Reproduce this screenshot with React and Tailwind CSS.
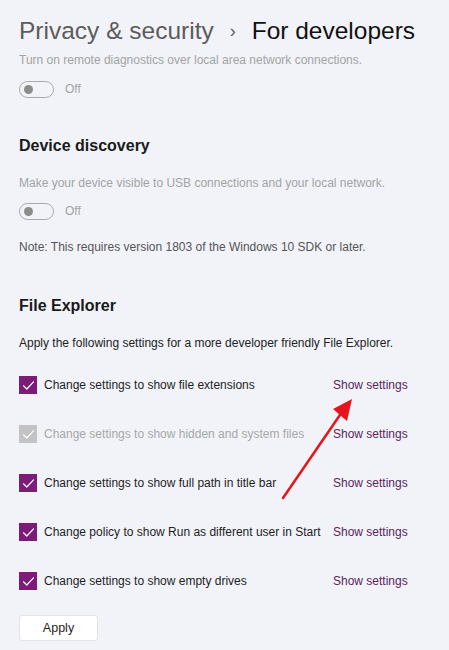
import React from "react";

function Toggle() {
  return (
    <div className="h-[20px] flex items-center">
      <div className="w-[35px] h-[17px] rounded-full border border-[#a9a9a9] flex items-center pl-[4px]">
        <div className="w-[9px] h-[9px] rounded-full bg-[#8c8c8c]" />
      </div>
      <span className="ml-[11px] text-[12px] text-[#a3a3a3]">Off</span>
    </div>
  );
}

function Check({ disabled }) {
  return (
    <div
      className={
        "w-[18px] h-[18px] flex items-center justify-center shrink-0 " +
        (disabled ? "bg-[#c3c3c6]" : "bg-[#7c1b78]")
      }
    >
      <svg width="13" height="13" viewBox="0 0 13 13" fill="none">
        <path d="M1.5 6.8 L4.8 10 L11.5 2.8" stroke="white" strokeWidth="1.2" strokeLinecap="round" strokeLinejoin="round" />
      </svg>
    </div>
  );
}

function Row({ label, disabled, first }) {
  return (
    <div className={"h-[20px] flex items-center " + (first ? "mt-[23px]" : "mt-[29px]")}>
      <Check disabled={disabled} />
      <span
        className={
          "ml-[7px] w-[289px] text-[12px] whitespace-nowrap " +
          (disabled ? "text-[#a8a8a8]" : "text-[#1e1e1e]")
        }
      >
        {label}
      </span>
      <span className="text-[12px] text-[#5b2459] whitespace-nowrap">Show settings</span>
    </div>
  );
}

export default function App() {
  return (
    <div
      className="relative w-[449px] h-[650px] bg-[#f1f3f9] overflow-hidden px-[19px]"
      style={{ fontFamily: '"Liberation Sans", Arial, sans-serif' }}
    >
      <div className="mt-[15px] h-[32px] flex items-center whitespace-nowrap">
        <span className="text-[24.5px] text-[#5c5c5c]">Privacy &amp; security</span>
        <span className="mx-[16px] text-[18px] text-[#5c5c5c]">›</span>
        <span className="text-[24.5px] text-[#111]">For developers</span>
      </div>
      <div className="mt-[4px] h-[18px] flex items-center text-[12px] text-[#a3a3a3]">
        Turn on remote diagnostics over local area network connections.
      </div>
      <div className="mt-[10px]">
        <Toggle />
      </div>

      <div className="mt-[35px] h-[24px] flex items-center text-[16px] font-semibold text-[#1a1a1a]">
        Device discovery
      </div>
      <div className="mt-[16px] h-[18px] flex items-center text-[12px] text-[#a3a3a3]">
        Make your device visible to USB connections and your local network.
      </div>
      <div className="mt-[9px]">
        <Toggle />
      </div>
      <div className="mt-[17px] h-[18px] flex items-center text-[12px] text-[#555]">
        Note: This requires version 1803 of the Windows 10 SDK or later.
      </div>

      <div className="mt-[38px] h-[24px] flex items-center text-[16px] font-semibold text-[#1a1a1a]">
        File Explorer
      </div>
      <div className="mt-[16px] h-[18px] flex items-center text-[12px] text-[#222]">
        Apply the following settings for a more developer friendly File Explorer.
      </div>

      <Row first label="Change settings to show file extensions" />
      <Row disabled label="Change settings to show hidden and system files" />
      <Row label="Change settings to show full path in title bar" />
      <Row label="Change policy to show Run as different user in Start" />
      <Row label="Change settings to show empty drives" />

      <button className="mt-[24px] w-[79px] h-[26px] bg-white border border-[#e3e3e6] rounded-[3px] text-[12.5px] text-[#1e1e1e]">
        Apply
      </button>

      <svg className="absolute left-0 top-0 pointer-events-none" width="449" height="650">
        <line x1="283" y1="498" x2="342" y2="412" stroke="#e8141b" strokeWidth="2.5" strokeLinecap="round" />
        <polygon points="352,399 333,409 347,421" fill="#e8141b" />
      </svg>
    </div>
  );
}
